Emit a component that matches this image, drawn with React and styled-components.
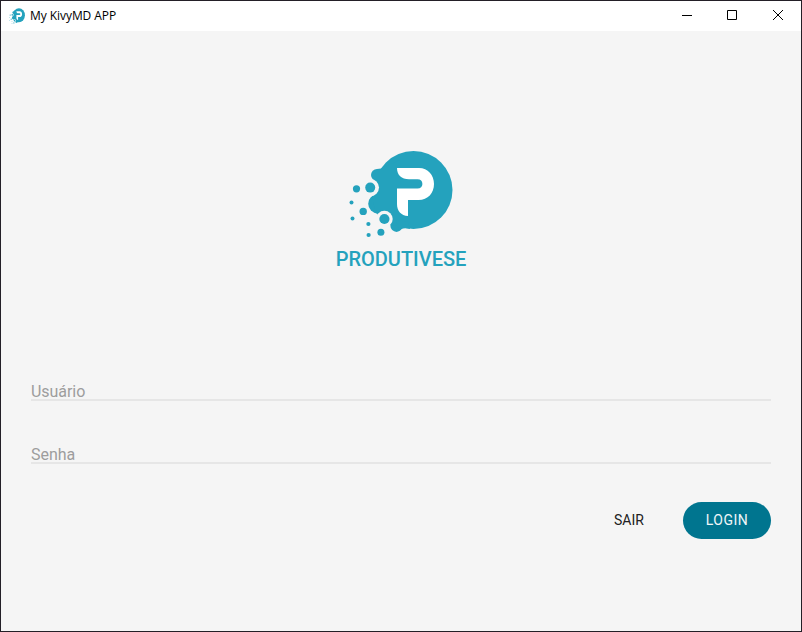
import React from "react";
import styled, { createGlobalStyle } from "styled-components";

const GlobalStyle = createGlobalStyle`
  *, *::before, *::after { box-sizing: border-box; }
  body { margin: 0; overflow: hidden; background: #f5f5f5; }
  button, input { font-family: Roboto, sans-serif; margin: 0; border: 0; outline: 0; }
`;

const Window = styled.div`
  display: flex;
  flex-direction: column;
  width: 802px;
  height: 632px;
  background: #f5f5f5;
  border: 1px solid #231f27;
  font-family: Roboto, sans-serif;
`;

const TitleBar = styled.header`
  display: flex;
  align-items: center;
  height: 30px;
  padding-left: 8px;
  background: #fff;
`;

const WindowTitle = styled.span`
  flex: 1;
  margin-left: 5px;
  font: 12px/16px "Open Sans", sans-serif;
  letter-spacing: -0.06px;
  color: #000;
`;

const Controls = styled.div`
  display: flex;
  height: 100%;
`;

const ControlButton = styled.button`
  display: flex;
  justify-content: center;
  width: ${({ $last }) => ($last ? 46 : 45)}px;
  padding: 9px 0 0 ${({ $last }) => ($last ? 1 : 0)}px;
  background: none;
  color: #000;
`;

const Screen = styled.main`
  display: flex;
  flex-direction: column;
  flex: 1;
  padding: 119px 30px 0;
`;

const Brand = styled.section`
  display: flex;
  flex-direction: column;
  align-items: center;
  height: 225px;
`;

const BrandName = styled.h1`
  margin: 9px 0 0;
  font-size: 20px;
  line-height: 24px;
  font-weight: 500;
  color: #24a2bd;
`;

const TextField = styled.input`
  height: 26px;
  margin-bottom: 37px;
  padding: 6px 0 0;
  background: transparent;
  box-shadow: inset 0 -2px #e6e6e6;
  border-radius: 0;
  font-size: 16px;
  line-height: 20px;
  letter-spacing: -0.05px;
  &::placeholder { color: #9d9d9d; opacity: 1; }
`;

const Actions = styled.div`
  display: flex;
  justify-content: flex-end;
  gap: 10px;
  margin-top: 1px;
`;

const Button = styled.button`
  width: 88px;
  height: 37px;
  padding: 0;
  border-radius: 19px;
  font-size: 14px;
  line-height: 37px;
  letter-spacing: ${({ $filled }) => ($filled ? "0.5px" : "0")};
  background: ${({ $filled }) => ($filled ? "#00758f" : "transparent")};
  color: ${({ $filled }) => ($filled ? "#f0f7f9" : "#212121")};
`;

const DOTS = [
  [356.5, 188.8, 3.6],
  [370.2, 187.6, 5],
  [351.5, 202.6, 2],
  [363.2, 211.4, 3.7],
  [352.5, 218.6, 2],
  [384.4, 219, 5.1],
  [368.4, 224, 2.1],
  [368.6, 235, 2.1],
  [380.9, 232.2, 3.5],
];

function Logo({ width, height, id, color = "#24a2bd" }) {
  return (
    <svg
      width={width}
      height={height}
      viewBox="349 150 104 88"
      preserveAspectRatio="none"
      aria-hidden="true"
    >
      <mask id={id} maskUnits="userSpaceOnUse" x="345" y="145" width="112" height="98">
        <rect x="345" y="145" width="112" height="98" fill="#fff" />
        <circle cx="370.2" cy="187.6" r="8.8" fill="#000" />
        <circle cx="384.4" cy="219" r="8.3" fill="#000" />
      </mask>
      <g fill={color} mask={`url(#${id})`}>
        <circle cx="413.5" cy="190" r="39" />
        <circle cx="377" cy="175" r="6" />
        <circle cx="377.8" cy="203.8" r="9.6" />
        <circle cx="396.5" cy="225.8" r="6.1" />
        <path d="M377 169 L381 168.5 L400 160 V226 L390 225 L376 213 L372 198 L373 179 Z" />
        <path d="M396 220 L408 222 L410 229 Q402 227 399 231 Z" />
      </g>
      <g fill={color}>
        {DOTS.map(([cx, cy, r]) => (
          <circle key={`${cx}-${cy}`} cx={cx} cy={cy} r={r} />
        ))}
      </g>
      <path
        fill="#fff"
        d="M397 168 H419 C428 168 434 175 434 184 C434 193 428 200 418.5 200 H408 V216 C401 215.5 397 211 397 204 V188.5 H417.5 C420.7 188.5 422.4 186.6 422.4 184 C422.4 181.2 420.7 179.3 417.5 179.3 H409 C401.5 179.3 397 175 397 168 Z"
      />
    </svg>
  );
}

function ControlIcon({ path }) {
  return (
    <svg width="11" height="11" viewBox="0 0 11 11" fill="none" stroke="currentColor">
      <path d={path} />
    </svg>
  );
}

export default function App() {
  return (
    <>
      <GlobalStyle />
      <Window>
        <TitleBar>
          <Logo width={16} height={16} id="title-logo" />
          <WindowTitle>My KivyMD APP</WindowTitle>
          <Controls>
            <ControlButton aria-label="Minimize">
              <ControlIcon path="M0 5.5H10" />
            </ControlButton>
            <ControlButton aria-label="Maximize">
              <ControlIcon path="M0.5 0.5H9.5V9.5H0.5Z" />
            </ControlButton>
            <ControlButton aria-label="Close" $last>
              <ControlIcon path="M0 0L10 10M10 0L0 10" />
            </ControlButton>
          </Controls>
        </TitleBar>
        <Screen>
          <Brand>
            <Logo width={104} height={88} id="brand-logo" />
            <BrandName>PRODUTIVESE</BrandName>
          </Brand>
          <TextField placeholder="Usuário" />
          <TextField placeholder="Senha" />
          <Actions>
            <Button>SAIR</Button>
            <Button $filled>LOGIN</Button>
          </Actions>
        </Screen>
      </Window>
    </>
  );
}
